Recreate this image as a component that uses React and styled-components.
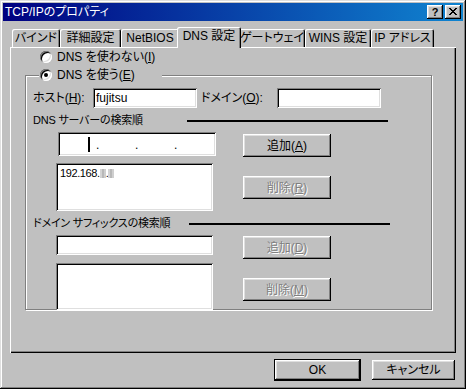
import React from "react";
import styled, { createGlobalStyle } from "styled-components";

const Global = createGlobalStyle`
  html, body { margin: 0; padding: 0; background: #c0c0c0; }
  * { box-sizing: border-box; }
`;

const raised = `inset -1px -1px 0 #000, inset 1px 1px 0 #fff, inset -2px -2px 0 #808080, inset 2px 2px 0 #dfdfdf`;
const sunken = `inset 1px 1px 0 #808080, inset -1px -1px 0 #fff, inset 2px 2px 0 #000, inset -2px -2px 0 #dfdfdf`;

const Window = styled.div`
  width: 466px;
  height: 389px;
  padding: 3px;
  background: #c0c0c0;
  display: flex;
  flex-direction: column;
  box-shadow: inset -1px -1px 0 #000, inset 1px 1px 0 #dfdfdf, inset -2px -2px 0 #808080, inset 2px 2px 0 #fff;
  font-family: "Liberation Sans", "Noto Sans CJK JP", sans-serif;
  font-size: 12px;
  font-feature-settings: "palt";
  color: #000;
  line-height: 14px;
`;

const TitleBar = styled.div`
  height: 18px;
  flex: none;
  display: flex;
  align-items: center;
  padding: 0 2px 0 2px;
  background: linear-gradient(to right, #000080, #1084d0);
  color: #fff;
`;

const Title = styled.span`
  flex: 1;
  white-space: nowrap;
`;

const CaptionButton = styled.div`
  width: 16px;
  height: 14px;
  margin-left: ${(p) => p.$ml || 0}px;
  background: #c0c0c0;
  box-shadow: ${raised};
  display: flex;
  align-items: center;
  justify-content: center;
  color: #000;
  font-weight: bold;
  font-size: 11px;
  line-height: 12px;
  padding-bottom: 1px;
`;

const Body = styled.div`
  flex: 1;
  display: flex;
  flex-direction: column;
  padding: 6px 7px 0 7px;
`;

const TabStrip = styled.div`
  position: relative;
  z-index: 1;
  height: 20px;
  flex: none;
  display: flex;
  align-items: flex-end;
  padding-left: 2px;
`;

const Tab = styled.div`
  position: relative;
  z-index: ${(p) => (p.$active ? 2 : 1)};
  width: ${(p) => p.$w}px;
  height: ${(p) => (p.$active ? 21 : 18)}px;
  margin: ${(p) => (p.$active ? "0 -2px -1px" : "0")};
  padding-bottom: ${(p) => (p.$active ? 3 : 0)}px;
  background: #c0c0c0;
  border-radius: 2px 2px 0 0;
  box-shadow: inset 1px 1px 0 #fff, inset -1px 0 0 #000, inset -2px 0 0 #808080;
  display: flex;
  align-items: center;
  justify-content: center;
  white-space: nowrap;
`;

const Panel = styled.div`
  height: 306px;
  flex: none;
  background: #c0c0c0;
  box-shadow: inset 1px 1px 0 #fff, inset -1px -1px 0 #000, inset -2px -2px 0 #808080;
  padding: 3px 0 0 15px;
  display: flex;
  flex-direction: column;
  align-items: flex-start;
`;

const RadioRow = styled.div`
  height: 14px;
  display: flex;
  align-items: center;
  gap: 5px;
  margin-left: ${(p) => p.$ml || 0}px;
  white-space: nowrap;
`;

const RadioCircle = styled.span`
  width: 12px;
  height: 12px;
  flex: none;
  border-radius: 50%;
  background: #fff;
  box-shadow: ${sunken};
  display: flex;
  align-items: center;
  justify-content: center;
  &::after {
    content: "";
    width: 4px;
    height: 4px;
    border-radius: 50%;
    background: ${(p) => (p.$checked ? "#000" : "transparent")};
  }
`;

const GroupBox = styled.div`
  width: 407px;
  height: 235px;
  margin-top: 11px;
  border: 1px solid #808080;
  box-shadow: 1px 1px 0 #fff, inset 1px 1px 0 #fff;
  padding-left: 7px;
  display: flex;
  flex-direction: column;
  align-items: flex-start;
`;

const Legend = styled.div`
  width: 123px;
  margin: -8px 0 0 6px;
  padding-left: 1px;
  background: #c0c0c0;
`;

const HostRow = styled.div`
  margin-top: 6px;
  height: 20px;
  display: flex;
  align-items: center;
`;

const Label = styled.span`
  width: ${(p) => p.$w}px;
  margin-left: ${(p) => p.$ml || 0}px;
  white-space: nowrap;
  flex: none;
`;

const Field = styled.div`
  width: ${(p) => p.$w}px;
  height: ${(p) => p.$h}px;
  margin-left: ${(p) => p.$ml || 0}px;
  flex: none;
  background: #fff;
  box-shadow: ${sunken};
  padding: ${(p) => (p.$list ? "3px 4px" : "2px 3px")};
  display: flex;
  align-items: ${(p) => (p.$list ? "flex-start" : "center")};
`;

const Header = styled.div`
  margin-top: 5px;
  height: 14px;
  display: grid;
  grid-template-columns: ${(p) => p.$lw}px 201px;
  align-items: center;
  white-space: nowrap;
`;

const HeaderText = styled.span`
  font-size: 11px;
  letter-spacing: -0.2px;
`;

const Rule = styled.div`
  height: 2px;
  margin-top: 1px;
  background: #000;
`;

const CtrlRow = styled.div`
  margin: ${(p) => p.$mt}px 0 0 23px;
  display: flex;
  align-items: flex-start;
`;

const LeftCol = styled.div`
  width: 160px;
  flex: none;
  display: flex;
`;

const Button = styled.div`
  width: ${(p) => p.$w}px;
  height: ${(p) => p.$h}px;
  margin: ${(p) => p.$mt || 0}px 0 0 ${(p) => p.$ml || 0}px;
  flex: none;
  background: #c0c0c0;
  border: ${(p) => (p.$default ? "1px solid #000" : "none")};
  box-shadow: ${raised};
  display: flex;
  align-items: center;
  justify-content: center;
  white-space: nowrap;
  color: ${(p) => (p.$disabled ? "#808080" : "#000")};
  text-shadow: ${(p) => (p.$disabled ? "1px 1px 0 #fff" : "none")};
`;

const U = styled.span`
  text-decoration: underline;
  text-underline-offset: 1px;
`;

const IpSeg = styled.span`
  width: 36px;
  height: 100%;
  flex: none;
  display: flex;
  align-items: center;
  justify-content: flex-end;
  padding-right: 6px;
`;

const IpDot = styled.span`
  width: 3px;
  flex: none;
  align-self: flex-end;
  line-height: 14px;
  margin-bottom: 2px;
`;

const Caret = styled.span`
  width: 2px;
  height: 15px;
  background: #000;
`;

const IpText = styled.span`
  font-size: 11px;
  letter-spacing: -0.4px;
  display: flex;
  align-items: center;
`;

const Blur = styled.span`
  width: 6px;
  height: 9px;
  margin-top: 1px;
  background:
    linear-gradient(90deg, #d4d4d4 0 2px, #b8b8b8 2px 4px, #cfcfcf 4px 6px),
    #c8c8c8;
`;

const Footer = styled.div`
  margin-top: 6px;
  padding-right: 1px;
  height: 22px;
  display: flex;
  justify-content: flex-end;
  align-items: center;
  gap: 11px;
`;

const tabs = [
  { label: "バインド", w: 48 },
  { label: "詳細設定", w: 61 },
  { label: "NetBIOS", w: 58 },
  { label: "DNS 設定", w: 64, active: true },
  { label: "ゲートウェイ", w: 66 },
  { label: "WINS 設定", w: 66 },
  { label: "IP アドレス", w: 63 },
];

export default function App() {
  return (
    <>
      <Global />
      <Window>
        <TitleBar>
          <Title>TCP/IPのプロパティ</Title>
          <CaptionButton>?</CaptionButton>
          <CaptionButton $ml={2}>
            <svg width="8" height="7" viewBox="0 0 8 7" shapeRendering="crispEdges">
              <path d="M0 0h2v1h1v1h2v-1h1v-1h2v1h-1v1h-1v1h-1v1h1v1h1v1h1v1h-2v-1h-1v-1h-2v1h-1v1h-2v-1h1v-1h1v-1h1v-1h-1v-1h-1v-1h-1z" fill="#000" />
            </svg>
          </CaptionButton>
        </TitleBar>
        <Body>
          <TabStrip>
            {tabs.map((t) => (
              <Tab key={t.label} $w={t.w} $active={t.active}>
                {t.label}
              </Tab>
            ))}
          </TabStrip>
          <Panel>
            <RadioRow $ml={15}>
              <RadioCircle />
              <span>
                DNS を使わない(<U>I</U>)
              </span>
            </RadioRow>
            <GroupBox>
              <Legend>
                <RadioRow>
                  <RadioCircle $checked />
                  <span>
                    DNS を使う(<U>E</U>)
                  </span>
                </RadioRow>
              </Legend>
              <HostRow>
                <Label $w={60}>
                  ホスト(<U>H</U>):
                </Label>
                <Field $w={104} $h={20}>fujitsu</Field>
                <Label $w={76} $ml={4}>
                  ドメイン(<U>O</U>):
                </Label>
                <Field $w={104} $h={20} />
              </HostRow>
              <Header $lw={154}>
                <HeaderText>DNS サーバーの検索順</HeaderText>
                <Rule />
              </Header>
              <CtrlRow $mt={5}>
                <LeftCol>
                  <Field $w={158} $h={24} $ml={2} style={{ padding: "2px 2px" }}>
                    <IpSeg>
                      <Caret />
                    </IpSeg>
                    <IpDot>.</IpDot>
                    <IpSeg />
                    <IpDot>.</IpDot>
                    <IpSeg />
                    <IpDot>.</IpDot>
                    <IpSeg />
                  </Field>
                </LeftCol>
                <Button $w={88} $h={23} $mt={2} $ml={27}>
                  追加(<U>A</U>)
                </Button>
              </CtrlRow>
              <CtrlRow $mt={6}>
                <LeftCol>
                  <Field $w={157} $h={48} $list>
                    <IpText>
                      192.168.<Blur />.<Blur />
                    </IpText>
                  </Field>
                </LeftCol>
                <Button $w={88} $h={23} $mt={13} $ml={27} $disabled>
                  削除(<U>R</U>)
                </Button>
              </CtrlRow>
              <Header $lw={156}>
                <HeaderText>ドメイン サフィックスの検索順</HeaderText>
                <Rule />
              </Header>
              <CtrlRow $mt={5}>
                <LeftCol>
                  <Field $w={157} $h={20} />
                </LeftCol>
                <Button $w={88} $h={23} $mt={1} $ml={27} $disabled>
                  追加(<U>D</U>)
                </Button>
              </CtrlRow>
              <CtrlRow $mt={4}>
                <LeftCol>
                  <Field $w={157} $h={47} $list />
                </LeftCol>
                <Button $w={88} $h={23} $mt={15} $ml={27} $disabled>
                  削除(<U>M</U>)
                </Button>
              </CtrlRow>
            </GroupBox>
          </Panel>
          <Footer>
            <Button $w={87} $h={22} $default>
              OK
            </Button>
            <Button $w={83} $h={20}>
              キャンセル
            </Button>
          </Footer>
        </Body>
      </Window>
    </>
  );
}
